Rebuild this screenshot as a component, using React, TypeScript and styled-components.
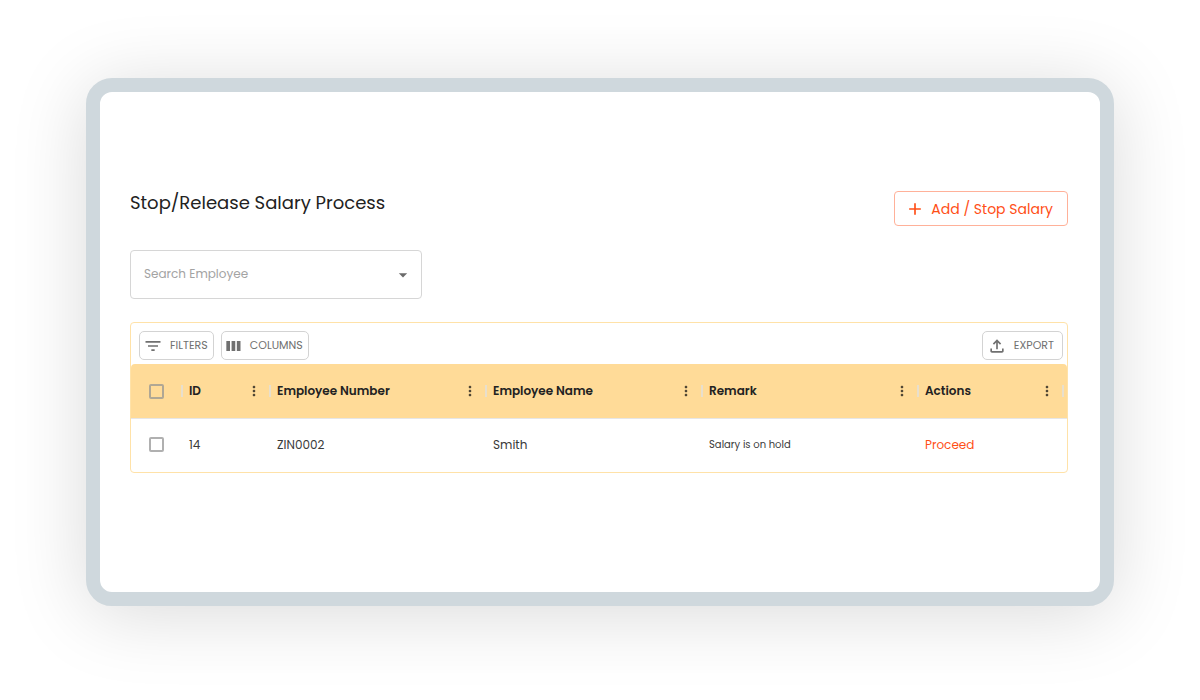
import React from "react";
import styled, { createGlobalStyle } from "styled-components";

const GlobalStyle = createGlobalStyle`
  * { box-sizing: border-box; }
  body {
    margin: 0;
    background: #fff;
    color: #222;
    font-family: Poppins, Inter, "Liberation Sans", sans-serif;
  }
  button, input { font-family: inherit; }
`;

const Page = styled.main`
  min-height: 100vh;
  padding: 78px 86px 94px;
  display: flex;
`;

const Frame = styled.section`
  flex: 1;
  min-width: 0;
  border: 14px solid #cfd8dd;
  border-radius: 26px;
  background: #fff;
  padding: 99px 32px 40px 30px;
  box-shadow: 0 8px 76px rgba(0, 0, 0, 0.15);
`;

const PageHeader = styled.header`
  display: flex;
  justify-content: space-between;
  align-items: flex-start;
  margin-bottom: 24px;
`;

const Title = styled.h1`
  margin: 0;
  font-size: 18px;
  line-height: 24px;
  font-weight: 400;
`;

const AddButton = styled.button`
  display: flex;
  align-items: center;
  gap: 6px;
  height: 35px;
  padding: 1px 14px 0 10px;
  border: 1px solid #ffb199;
  border-radius: 4px;
  background: #fff;
  color: #ff4f17;
  font-size: 14px;
  cursor: pointer;
`;

const SearchField = styled.div`
  display: flex;
  align-items: center;
  width: 292px;
  height: 49px;
  margin-bottom: 23px;
  padding: 0 8px 0 13px;
  border: 1px solid #d6d6d6;
  border-radius: 4px;
`;

const SearchInput = styled.input`
  flex: 1;
  min-width: 0;
  padding: 0 0 2px;
  border: 0;
  outline: 0;
  background: transparent;
  font-size: 12px;
  color: #222;
  &::placeholder { color: #a3a3a3; opacity: 1; }
`;

const IconButton = styled.button`
  display: inline-flex;
  padding: 0;
  border: 0;
  background: transparent;
  color: #6b6b6b;
  cursor: pointer;
`;

const GridPanel = styled.section`
  border: 1px solid #ffe2a8;
  border-radius: 4px;
`;

const Toolbar = styled.div`
  display: flex;
  align-items: center;
  gap: 7px;
  padding: 8px 4px 4px 8px;
`;

const ToolButton = styled.button<{ $pushed?: boolean; $left: number; $right: number }>`
  display: flex;
  align-items: center;
  gap: 7px;
  height: 29px;
  padding: 0 ${(p) => p.$right}px 0 ${(p) => p.$left}px;
  margin-left: ${(p) => (p.$pushed ? "auto" : "0")};
  border: 1px solid #d3d3d3;
  border-radius: 5px;
  background: #fff;
  color: #707070;
  font-size: 11px;
  cursor: pointer;
`;

const Table = styled.table`
  width: 100%;
  table-layout: fixed;
  border-collapse: separate;
  border-spacing: 0;
`;

const Column = styled.col<{ $width?: number }>`
  width: ${(p) => (p.$width ? `${p.$width}px` : "auto")};
`;

const HeadCell = styled.th`
  height: 54px;
  padding: 0;
  background: #ffdb98;
  font-size: 12px;
  font-weight: 600;
  text-align: left;
  &:first-child { border-top-left-radius: 4px; }
  &:last-child { border-top-right-radius: 4px; padding-right: 3px; }
`;

const HeadContent = styled.div<{ $check?: boolean }>`
  display: flex;
  align-items: center;
  height: 12px;
  padding-left: ${(p) => (p.$check ? 18 : 6)}px;
  border-right: 2px solid #e8dfcd;
  ${IconButton} { margin: 0 7px 0 auto; color: #4d4433; }
`;

const Cell = styled.td<{ $check?: boolean; $small?: boolean }>`
  height: 54px;
  padding: 0 0 2px ${(p) => (p.$check ? 18 : 6)}px;
  border-top: 1px solid #e6e6e6;
  font-size: ${(p) => (p.$small ? 10 : 12)}px;
  color: #3a3a3a;
`;

const Checkbox = styled.input`
  appearance: none;
  display: block;
  flex: none;
  width: 15px;
  height: 15px;
  margin: 0;
  border: 2px solid #b0b0b0;
  border-radius: 2px;
  background: #fff;
  ${HeadContent} & { background: transparent; border-color: #b0a794; }
  &:checked { background: #ff4f17; border-color: #ff4f17; }
`;

const ActionLink = styled.a`
  color: #ff4f17;
  text-decoration: none;
`;

const paths = {
  add: "M19 13h-6v6h-2v-6H5v-2h6V5h2v6h6v2z",
  arrow: "M7 10l5 5 5-5z",
  filter: "M10 18h4v-2h-4v2zM3 6v2h18V6H3zm3 7h12v-2H6v2z",
  columns: "M4 6h4.4v12H4zM10.3 6h4.4v12h-4.4zM16.6 6H21v12h-4.4z",
  upload:
    "M18 15v3H6v-3H4v3c0 1.1.9 2 2 2h12c1.1 0 2-.9 2-2v-3h-2zM7 9l1.41 1.41L11 7.83V16h2V7.83l2.59 2.58L17 9l-5-5-5 5z",
  more: "M12 8c1.1 0 2-.9 2-2s-.9-2-2-2-2 .9-2 2 .9 2 2 2zm0 2c-1.1 0-2 .9-2 2s.9 2 2 2 2-.9 2-2-.9-2-2-2zm0 6c-1.1 0-2 .9-2 2s.9 2 2 2 2-.9 2-2-.9-2-2-2z",
};

function Icon({ name, size = 20 }: { name: keyof typeof paths; size?: number }) {
  return (
    <svg width={size} height={size} viewBox="0 0 24 24" fill="currentColor" aria-hidden="true">
      <path d={paths[name]} />
    </svg>
  );
}

const headings = ["ID", "Employee Number", "Employee Name", "Remark", "Actions"];
const rows = [{ id: 14, number: "ZIN0002", name: "Smith", remark: "Salary is on hold" }];

export default function App() {
  return (
    <>
      <GlobalStyle />
      <Page>
        <Frame>
          <PageHeader>
            <Title>Stop/Release Salary Process</Title>
            <AddButton type="button">
              <Icon name="add" />
              Add / Stop Salary
            </AddButton>
          </PageHeader>

          <SearchField>
            <SearchInput
              role="combobox"
              aria-expanded={false}
              aria-label="Search Employee"
              placeholder="Search Employee"
            />
            <IconButton type="button" aria-label="Open employee list">
              <Icon name="arrow" />
            </IconButton>
          </SearchField>

          <GridPanel>
            <Toolbar>
              <ToolButton type="button" $left={3} $right={5}>
                <Icon name="filter" />
                FILTERS
              </ToolButton>
              <ToolButton type="button" $left={1} $right={5}>
                <Icon name="columns" />
                COLUMNS
              </ToolButton>
              <ToolButton type="button" $left={4} $right={8} $pushed>
                <Icon name="upload" />
                EXPORT
              </ToolButton>
            </Toolbar>
            <Table>
              <colgroup>
                <Column $width={52} />
                <Column $width={88} />
                <Column $width={216} />
                <Column $width={216} />
                <Column $width={216} />
                <Column />
              </colgroup>
              <thead>
                <tr>
                  <HeadCell>
                    <HeadContent $check>
                      <Checkbox type="checkbox" aria-label="Select all rows" />
                    </HeadContent>
                  </HeadCell>
                  {headings.map((heading) => (
                    <HeadCell key={heading} scope="col">
                      <HeadContent>
                        {heading}
                        <IconButton type="button" aria-label={`${heading} column menu`}>
                          <Icon name="more" size={16} />
                        </IconButton>
                      </HeadContent>
                    </HeadCell>
                  ))}
                </tr>
              </thead>
              <tbody>
                {rows.map((row) => (
                  <tr key={row.id}>
                    <Cell $check>
                      <Checkbox type="checkbox" aria-label={`Select ${row.name}`} />
                    </Cell>
                    <Cell>{row.id}</Cell>
                    <Cell>{row.number}</Cell>
                    <Cell>{row.name}</Cell>
                    <Cell $small>{row.remark}</Cell>
                    <Cell>
                      <ActionLink href="#proceed">Proceed</ActionLink>
                    </Cell>
                  </tr>
                ))}
              </tbody>
            </Table>
          </GridPanel>
        </Frame>
      </Page>
    </>
  );
}
